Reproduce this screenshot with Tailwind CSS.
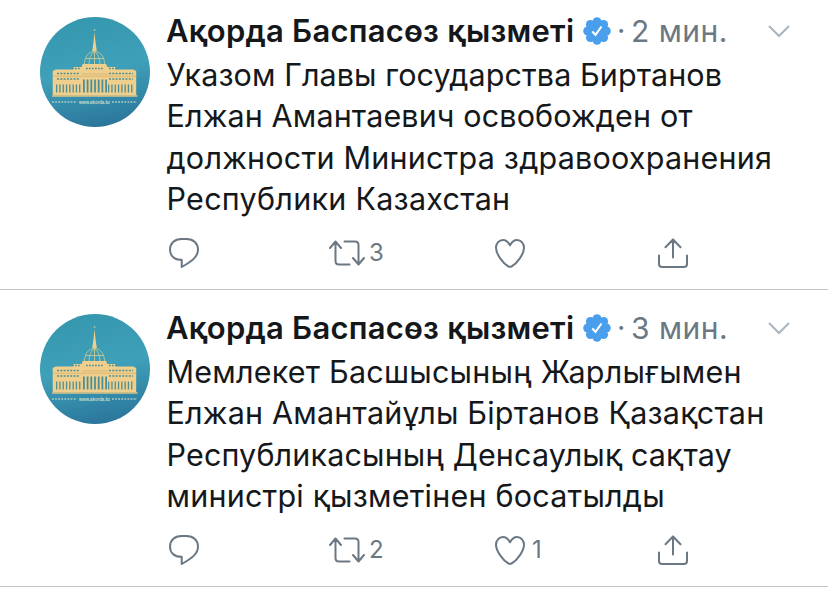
<!DOCTYPE html>
<html lang="kk">
<head>
<meta charset="utf-8">
<title>Ақорда Баспасөз қызметі</title>
<script src="https://cdn.jsdelivr.net/npm/@tailwindcss/browser@4"></script>
</head>
<body class="bg-white text-[#15181b] font-['Inter','Liberation_Sans',sans-serif] w-[828px] h-[595px] overflow-hidden">
<svg class="absolute size-0">
  <defs>
    <linearGradient id="sky" x1="0.3" y1="0" x2="0.5" y2="1"><stop offset="0" stop-color="#3597ae"/><stop offset=".5" stop-color="#3fa0b9"/><stop offset="1" stop-color="#2b779c"/></linearGradient>
    <symbol id="avatar" viewBox="0 0 110 110">
      <circle cx="55" cy="55" r="55" fill="url(#sky)"/>
      <g fill="#f0cf8c">
        <path d="M54.500 15l.7 7 .6 5 1 7h-4.600l1-7 .6-5z"/>
        <path d="M12.700 54l3-1.500h17l1-2.500h8l1-3h23.500l1 3h8l1 2.500h17l3 1.500v24.500H12.700z"/>
      </g>
      <circle cx="54.500" cy="13" r="1" fill="#a9bd92"/>
      <path d="M44.500 47c0-7 4-12.500 10-12.500s10 5.500 10 12.500M49 47c0-6 2-10 5.500-12.500C58 37 60 41 60 47M54.500 34v13M46 41.500h17" fill="none" stroke="#b9c499" stroke-width="1"/>
      <g fill="none" stroke="#4f8f93">
        <path d="M17 56.500h23M69 56.500h24M17 62h23M69 62h24" stroke-width="1.500" stroke-dasharray="2 1.300"/>
        <path d="M16 71.500h25M68 71.500h26" stroke-width="8" stroke-dasharray="1.300 2"/>
        <path d="M43 69h24" stroke-width="13" stroke-dasharray="1.800 1.900"/>
        <path d="M32 51.500h9M46 51.500h18M69 51.500h9" stroke-width="1.300" stroke-dasharray="1.700 1.300"/>
        <path d="M13 59.300h84M42 57h26" stroke-width=".6" stroke="#c9a866"/>
      </g>
      <path d="M12 79h85.500" stroke="#ddc486" stroke-width="1.500"/>
      <path d="M12 85h25M72 85h25" stroke="#8dbcc0" stroke-width="2" stroke-dasharray="1.800 1.300"/>
      <text x="39" y="86.800" font-size="4.500" font-weight="700" textLength="31" lengthAdjust="spacingAndGlyphs" font-family="Liberation Sans" fill="#c3dccb">www.akorda.kz</text>
    </symbol>
    <symbol id="badge" viewBox="0 0 28 28">
      <g fill="#4a9fec"><circle cx="14" cy="14" r="10.500"/><circle cx="14" cy="4.700" r="4.500"/><circle cx="20.600" cy="7.400" r="4.500"/><circle cx="23.300" cy="14" r="4.500"/><circle cx="20.600" cy="20.600" r="4.500"/><circle cx="14" cy="23.300" r="4.500"/><circle cx="7.400" cy="20.600" r="4.500"/><circle cx="4.700" cy="14" r="4.500"/><circle cx="7.400" cy="7.400" r="4.500"/></g>
      <path d="M9.300 14.500l3.200 3.300 6-8.300" fill="none" stroke="#fff" stroke-width="2.100"/>
    </symbol>
    <symbol id="chevron" viewBox="0 0 24 14"><path d="M2 2l10 10L22 2" fill="none" stroke="#aab5be" stroke-width="2"/></symbol>
    <symbol id="reply" viewBox="0 0 32 32"><path d="M13.500 2h5C25.500 2 30 6.500 30 12.500c0 7-5.500 11.500-16.300 17.500v-7.200C6 22.800 2 18.500 2 12.500S6.500 2 13.500 2z" fill="none" stroke="#6b7883" stroke-width="2" stroke-linejoin="round"/></symbol>
    <symbol id="retweet" viewBox="0 0 38 28"><path d="M2 9l5.500-6.500L13 9M7.500 3v19q0 3.500 3.500 3.500h10.500M36 19l-5.500 6.500L25 19M30.500 25V6q0-3.500-3.500-3.500H16.500" fill="none" stroke="#6b7883" stroke-width="2" stroke-linecap="round" stroke-linejoin="round"/></symbol>
    <symbol id="heart" viewBox="0 0 32 32"><path d="M16 8.300C14 4.500 11.700 3 9 3 4.800 3 2 6.500 2 10.800 2 17 9 26.500 14.500 29.500q1.500.700 3 0C23 26.500 30 17 30 10.800 30 6.500 27.200 3 23 3c-2.700 0-5 1.500-7 5.300z" fill="none" stroke="#6b7883" stroke-width="2" stroke-linejoin="round"/></symbol>
    <symbol id="share" viewBox="0 0 32 32"><path d="M2 18.500V27q0 3 3 3h22q3 0 3-3v-8.500M16 20.500V2.500M8.500 10.300L16 2.500l7.500 7.800" fill="none" stroke="#6b7883" stroke-width="2" stroke-linecap="round" stroke-linejoin="round"/></symbol>
  </defs>
</svg>
<main>
  <article class="flex h-[290px] border-b border-[#c3c7ca] pt-[17px] pl-10">
    <svg class="size-[110px] shrink-0"><use href="#avatar"/></svg>
    <div class="ml-4 flex w-[625px] flex-col">
      <header class="flex h-7 items-center whitespace-nowrap">
        <h2 class="w-[409px] text-[31px] font-semibold tracking-[0.230px]">Ақорда Баспасөз қызметі</h2>
        <svg class="ml-2 size-7 shrink-0"><use href="#badge"/></svg>
        <span class="ml-[6px] w-[9px] text-[29px] text-[#6b7883]">·</span>
        <time class="ml-[5px] text-[30px] tracking-[0.500px] text-[#6b7883]">2 мин.</time>
        <svg class="ml-auto h-[14px] w-6"><use href="#chevron"/></svg>
      </header>
      <p class="mt-[9px] flex flex-col items-start whitespace-nowrap pl-[0.500px] text-[30.500px] leading-[41.400px]">
        <span class="tracking-[0.090px]">Указом Главы государства Биртанов</span>
        <span class="tracking-[0.130px]">Елжан Амантаевич освобожден от</span>
        <span class="tracking-[0.220px]">должности Министра здравоохранения</span>
        <span class="tracking-[0.270px]">Республики Казахстан</span>
      </p>
      <footer class="mt-[15px] ml-[2px] grid h-8 grid-cols-[160px_165px_163px_40px] items-center text-[24px] text-[#6b7883]">
        <div><svg class="size-8"><use href="#reply"/></svg></div>
        <div class="flex items-center gap-[3px]"><svg class="h-7 w-[38px]"><use href="#retweet"/></svg><span>3</span></div>
        <div><svg class="ml-[1px] size-8"><use href="#heart"/></svg></div>
        <div><svg class="ml-px size-8"><use href="#share"/></svg></div>
      </footer>
    </div>
  </article>
  <article class="flex h-[297px] border-b border-[#c3c7ca] pt-6 pl-10">
    <svg class="size-[110px] shrink-0"><use href="#avatar"/></svg>
    <div class="ml-4 flex w-[625px] flex-col">
      <header class="flex h-7 items-center whitespace-nowrap">
        <h2 class="w-[409px] text-[31px] font-semibold tracking-[0.230px]">Ақорда Баспасөз қызметі</h2>
        <svg class="ml-2 size-7 shrink-0"><use href="#badge"/></svg>
        <span class="ml-[6px] w-[9px] text-[29px] text-[#6b7883]">·</span>
        <time class="ml-[5px] text-[30px] tracking-[0.500px] text-[#6b7883]">3 мин.</time>
        <svg class="ml-auto h-[14px] w-6"><use href="#chevron"/></svg>
      </header>
      <p class="mt-[9px] flex flex-col items-start whitespace-nowrap pl-[0.500px] text-[30.500px] leading-[41.400px]">
        <span class="tracking-[0.220px]">Мемлекет Басшысының Жарлығымен</span>
        <span class="tracking-[0.210px]">Елжан Амантайұлы Біртанов Қазақстан</span>
        <span class="tracking-[0.150px]">Республикасының Денсаулық сақтау</span>
        <span class="tracking-[0.210px]">министрі қызметінен босатылды</span>
      </p>
      <footer class="mt-[15px] ml-[2px] grid h-8 grid-cols-[160px_165px_163px_40px] items-center text-[24px] text-[#6b7883]">
        <div><svg class="size-8"><use href="#reply"/></svg></div>
        <div class="flex items-center gap-[3px]"><svg class="h-7 w-[38px]"><use href="#retweet"/></svg><span>2</span></div>
        <div class="flex items-center gap-[6px]"><svg class="ml-[1px] size-8"><use href="#heart"/></svg><span>1</span></div>
        <div><svg class="ml-px size-8"><use href="#share"/></svg></div>
      </footer>
    </div>
  </article>
</main>
</body>
</html>
